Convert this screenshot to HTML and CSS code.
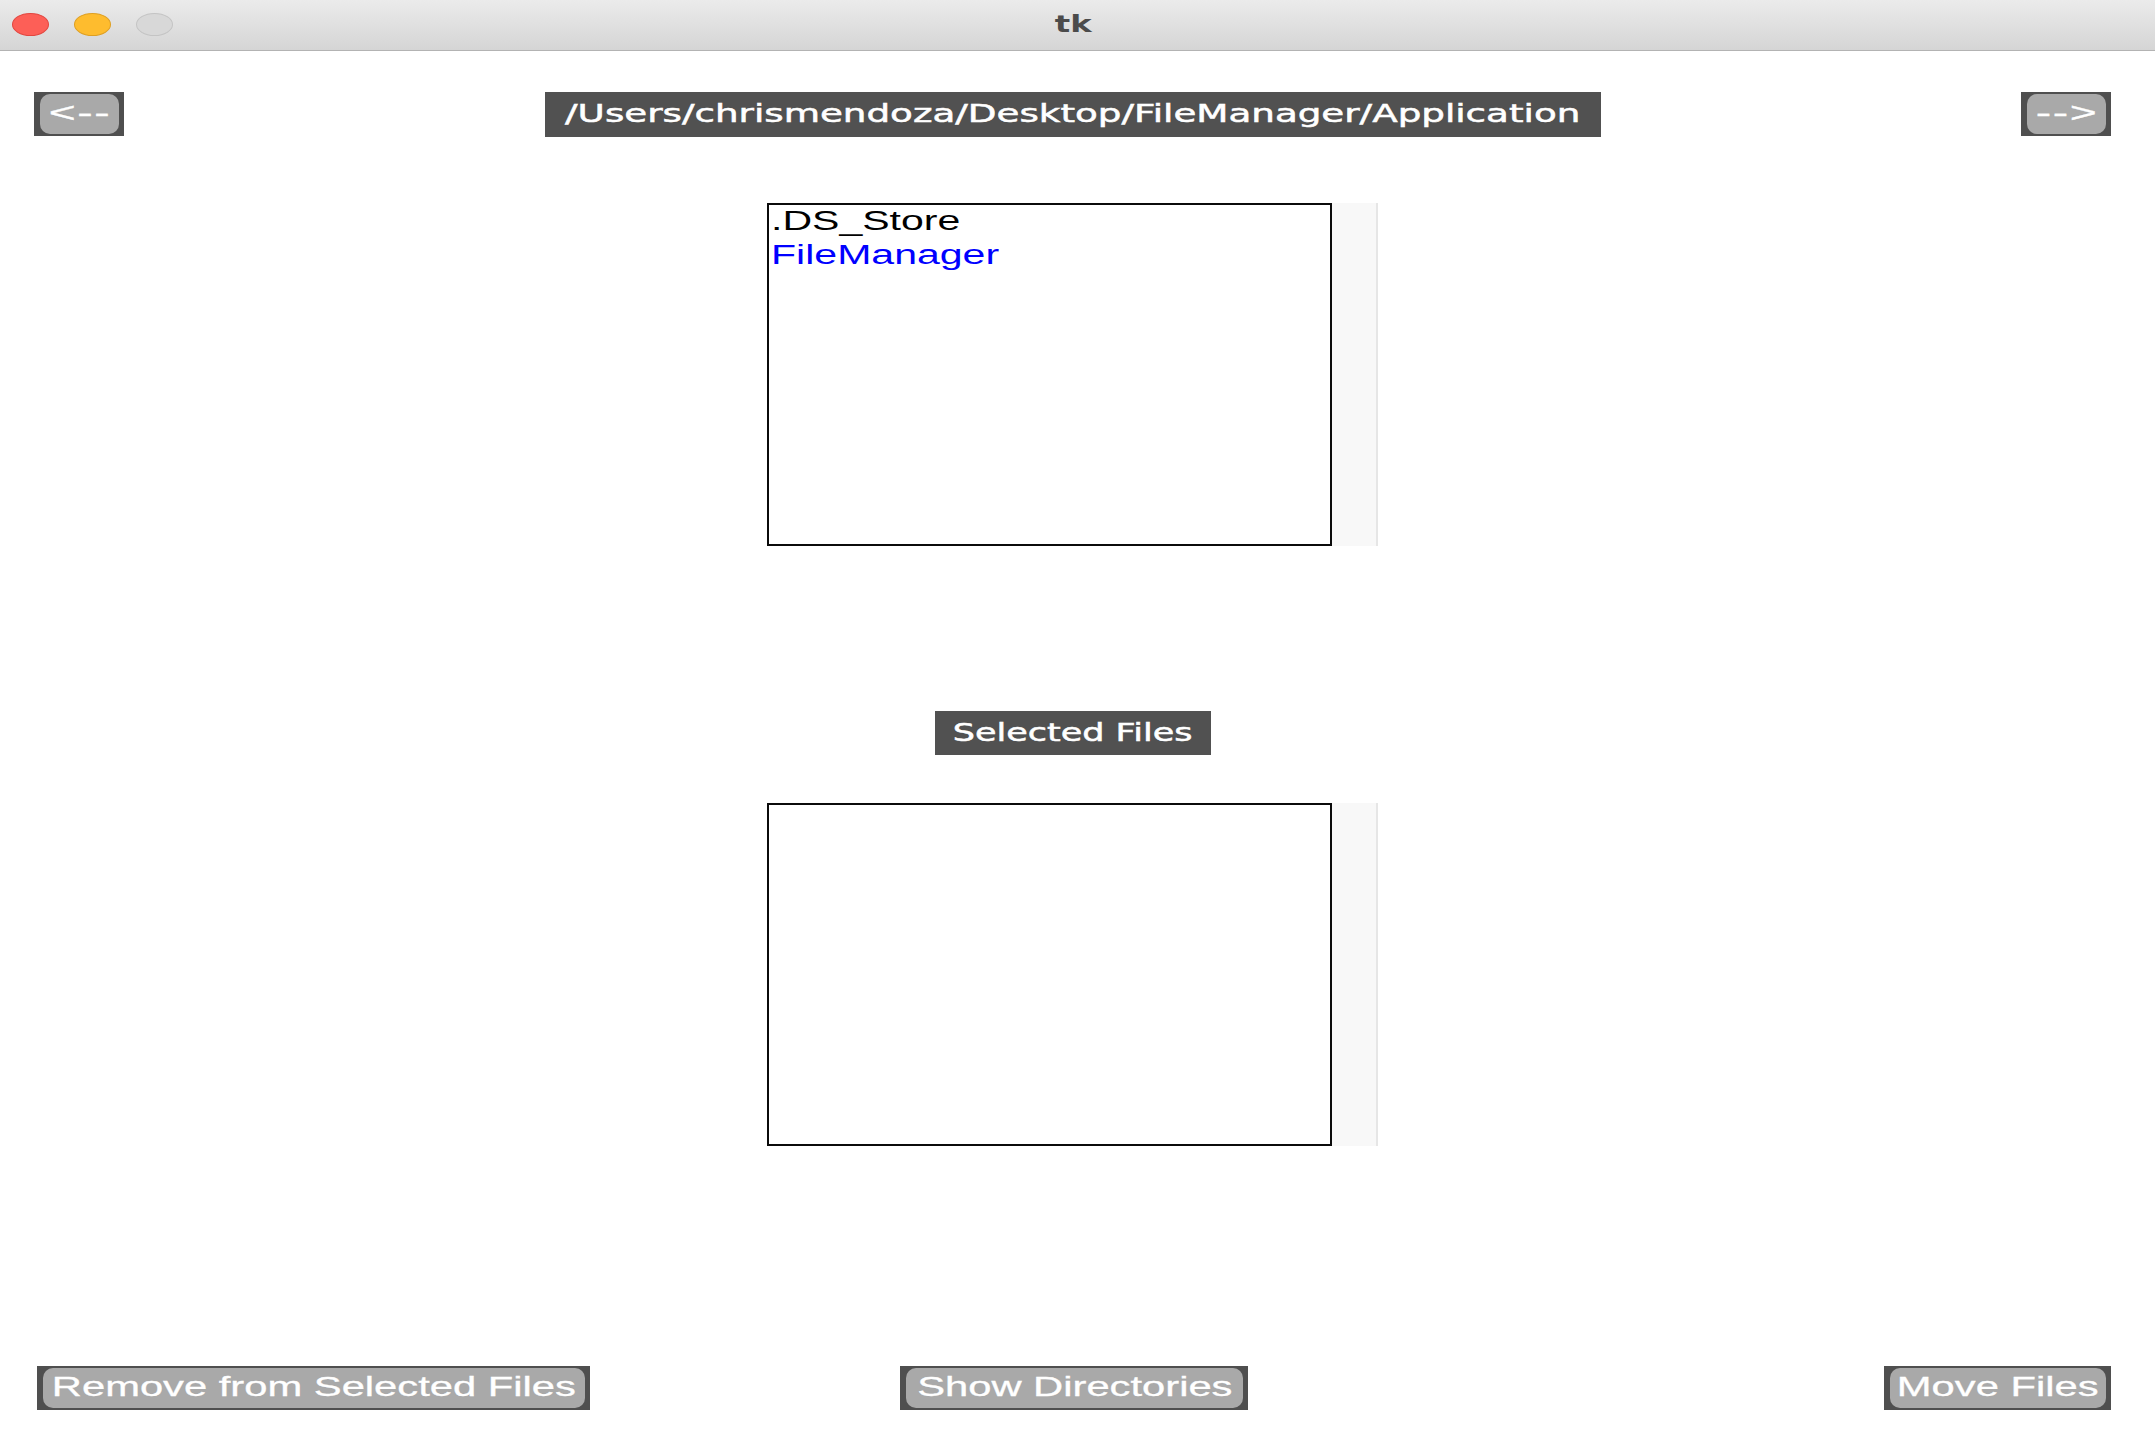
FILE: index.html
```html
<!DOCTYPE html>
<html>
<head>
<meta charset="utf-8">
<title>tk</title>
<link rel="stylesheet" href="styles.css">
</head>
<body>
<div class="window">
  <header class="titlebar">
    <div class="lights">
      <span class="light red"></span>
      <span class="light yellow"></span>
      <span class="light gray"></span>
    </div>
    <div class="title"><span class="title-txt">tk</span></div>
    <div class="spacer"></div>
  </header>

  <main class="content">
    <div class="toprow">
      <button class="btn btn-nav"><span class="face"><span class="txt">&lt;--</span></span></button>
      <div class="label label-path"><span class="ltxt ltxt-path">/Users/chrismendoza/Desktop/FileManager/Application</span></div>
      <button class="btn btn-nav"><span class="face"><span class="txt">--&gt;</span></span></button>
    </div>

    <div class="listwrap list-top">
      <div class="listbox">
        <div class="item"><span class="itxt">.DS_Store</span></div>
        <div class="item dir"><span class="itxt">FileManager</span></div>
      </div>
      <div class="scroll"></div>
    </div>

    <div class="labelrow">
      <div class="label label-sel"><span class="ltxt ltxt-sel">Selected Files</span></div>
    </div>

    <div class="listwrap list-bottom">
      <div class="listbox"></div>
      <div class="scroll"></div>
    </div>

    <div class="bottomrow">
      <div class="cell cell-left"><button class="btn btn-remove"><span class="face"><span class="txt">Remove from Selected Files</span></span></button></div>
      <div class="cell cell-mid"><button class="btn btn-show"><span class="face"><span class="txt">Show Directories</span></span></button></div>
      <div class="cell cell-right"><button class="btn btn-move"><span class="face"><span class="txt">Move Files</span></span></button></div>
    </div>
  </main>
</div>
</body>
</html>
```

FILE: styles.css
```css
html, body {
  margin: 0;
  padding: 0;
  background: #ffffff;
}

.window {
  width: 2155px;
  height: 1448px;
  display: flex;
  flex-direction: column;
  overflow: hidden;
  font-family: "Liberation Sans", Arial, sans-serif;
}

/* ---------- title bar ---------- */
.titlebar {
  height: 50px;
  border-bottom: 1px solid #b3b3b3;
  background: linear-gradient(#ebebeb, #d5d5d5);
  display: grid;
  grid-template-columns: 1fr auto 1fr;
  align-items: center;
  flex: none;
}

.lights {
  display: flex;
  gap: 25px;
  padding-left: 12px;
  padding-bottom: 2px;
  align-items: center;
}

.light {
  width: 37px;
  height: 23px;
  border-radius: 50%;
  box-sizing: border-box;
  border: 1px solid transparent;
}

.red { background: #fd5f57; border-color: #e2463f; }
.yellow { background: #febc2e; border-color: #de9f22; }
.gray { background: #d8d8d8; border-color: #c4c4c4; }

.title {
  display: flex;
  justify-content: center;
  padding-right: 8px;
  padding-bottom: 3px;
}

.title-txt {
  display: inline-block;
  font-family: "DejaVu Sans", sans-serif;
  font-weight: bold;
  font-size: 23px;
  color: #4b4b4b;
  transform: scaleX(1.4);
}

/* ---------- content ---------- */
.content {
  flex: 1;
  display: flex;
  flex-direction: column;
}

.toprow {
  margin-top: 41px;
  padding: 0 44px 0 34px;
  display: flex;
  justify-content: space-between;
  align-items: flex-start;
}

.btn {
  border: none;
  margin: 0;
  background: #4f4f4f;
  box-sizing: border-box;
  height: 44px;
  padding: 2px 5px 2px 6px;
  display: flex;
  cursor: pointer;
  font: inherit;
}

.face {
  flex: 1;
  background: #a9a9a9;
  border-radius: 10px;
  display: flex;
  align-items: center;
  justify-content: center;
  padding-bottom: 2px;
}

.txt {
  display: inline-block;
  color: #ffffff;
  font-family: "Liberation Sans", Arial, sans-serif;
  font-size: 28px;
  line-height: 1;
  white-space: nowrap;
  transform: scaleX(1.49);
  -webkit-text-stroke: 0.3px #ffffff;
}

.btn-nav { width: 90px; }
.btn-nav .txt { transform: scaleX(1.65); letter-spacing: 1px; }

.label {
  background: #515151;
  height: 45px;
  box-sizing: border-box;
  display: flex;
  align-items: center;
  justify-content: center;
  padding-bottom: 2px;
}

.label-path { width: 1056px; }
.label-sel { width: 276px; height: 44px; }

.ltxt {
  display: inline-block;
  color: #ffffff;
  font-family: "DejaVu Sans", sans-serif;
  font-size: 25px;
  line-height: 1;
  white-space: nowrap;
  -webkit-text-stroke: 0.5px #ffffff;
}

.ltxt-path { transform: scaleX(1.49); }
.ltxt-sel { transform: scaleX(1.4); }

/* ---------- list boxes ---------- */
.listwrap {
  display: flex;
  justify-content: center;
  padding: 0 44px 0 34px;
}

.list-top { margin-top: 66px; }
.list-bottom { margin-top: 48px; }

.listbox {
  width: 565px;
  height: 343px;
  box-sizing: border-box;
  border: 2px solid #0b0b0b;
  background: #ffffff;
  padding-left: 2px;
  overflow: hidden;
}

.scroll {
  width: 46px;
  height: 343px;
  box-sizing: border-box;
  background: #f8f8f8;
  border-right: 2px solid #e6e6e6;
}

.item {
  height: 34px;
  line-height: 32px;
  font-family: "Liberation Sans", Arial, sans-serif;
  font-size: 27px;
  color: #000000;
  white-space: nowrap;
}

.item.dir { color: #0000ff; }

.itxt {
  display: inline-block;
  transform: scaleX(1.52);
  transform-origin: left center;
}

.labelrow {
  margin-top: 165px;
  padding: 0 44px 0 34px;
  display: flex;
  justify-content: center;
}

/* ---------- bottom row ---------- */
.bottomrow {
  margin-top: 220px;
  padding: 0 44px 0 37px;
  display: grid;
  grid-template-columns: 1fr auto 1fr;
  align-items: center;
}

.cell { display: flex; }
.cell-left { justify-content: flex-start; }
.cell-mid { justify-content: center; }
.cell-right { justify-content: flex-end; }

.btn-remove { width: 553px; }
.btn-show { width: 348px; }
.btn-move { width: 227px; }
```
